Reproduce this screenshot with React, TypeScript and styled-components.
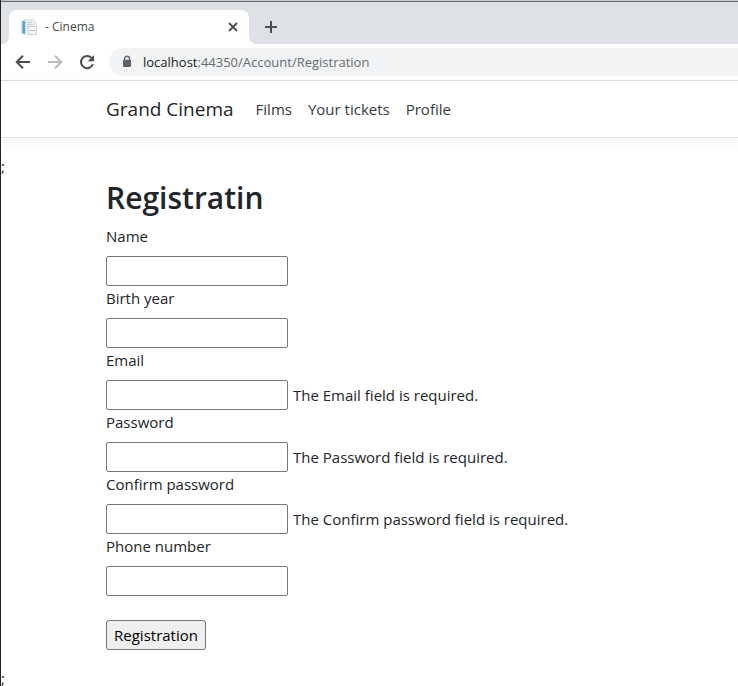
import React from "react";
import styled, { createGlobalStyle } from "styled-components";

const GlobalStyle = createGlobalStyle`
  *, *::before, *::after { box-sizing: border-box; }
  body {
    margin: 0;
    background: #fff;
    color: #212529;
    font-family: "Segoe UI", "Open Sans", "Noto Sans", sans-serif;
    font-size: 15px;
    line-height: 24px;
  }
`;

const Window = styled.div`
  border-left: 1px solid #242424;
  overflow: hidden;
`;

const TabStrip = styled.div`
  display: flex;
  align-items: flex-end;
  height: 44px;
  padding-left: 8px;
  border-top: 1px solid #c5cbc9;
  background: #dee1e6;
  box-shadow: inset 0 1px #666b6b;
`;

const Tab = styled.div`
  position: relative;
  display: flex;
  align-items: center;
  width: 240px;
  height: 34px;
  padding: 0 8px 0 12px;
  border-radius: 8px 8px 0 0;
  background: #fff;
  color: #45494d;
  font-size: 12px;

  &::before, &::after {
    content: "";
    position: absolute;
    bottom: 0;
    width: 8px;
    height: 8px;
  }
  &::before {
    right: 100%;
    background: radial-gradient(circle at 0 0, transparent 8px, #fff 8px);
  }
  &::after {
    left: 100%;
    background: radial-gradient(circle at 100% 0, transparent 8px, #fff 8px);
  }
`;

const TabTitle = styled.span`
  flex: 1;
  margin-left: 8px;
`;

const IconButton = styled.button<{ $size: number }>`
  display: grid;
  place-items: center;
  flex: none;
  width: ${(p) => p.$size}px;
  height: ${(p) => p.$size}px;
  padding: 0;
  border: 0;
  border-radius: 50%;
  background: transparent;
  color: #4a4e52;

  &:disabled { color: #b9bbbd; }
  svg { display: block; }
`;

const NewTab = styled(IconButton)`
  margin: 0 0 3px 8px;
`;

const Toolbar = styled.div`
  display: flex;
  align-items: center;
  gap: 4px;
  height: 37px;
  padding: 0 0 1px 8px;
  border-bottom: 1px solid #dadce0;
`;

const AddressBar = styled.div`
  display: flex;
  flex: 1;
  align-items: center;
  gap: 11px;
  height: 28px;
  margin-left: 4px;
  padding-left: 13px;
  border-radius: 14px 0 0 14px;
  background: #f1f3f4;
  color: #686c70;
  font-size: 13px;
`;

const Host = styled.span`
  color: #202124;
`;

const NavBar = styled.header`
  display: flex;
  align-items: center;
  height: 57px;
  padding: 0 105px;
  border-bottom: 1px solid #dee2e6;
  box-shadow: 0 4px 12px rgba(0, 0, 0, 0.05);
  white-space: nowrap;

  a { text-decoration: none; }
`;

const Brand = styled.a`
  margin-right: 22px;
  color: #212529;
  font-size: 19px;
  line-height: 28px;
`;

const NavLinks = styled.nav`
  display: flex;
  gap: 16px;
`;

const NavLink = styled.a`
  color: #343a40;
`;

const Page = styled.div`
  padding-top: 16px;
`;

const Main = styled.main`
  padding: 0 16px 16px 105px;
`;

const Title = styled.h1`
  margin: 0 0 6px;
  font-size: 30px;
  font-weight: 600;
  line-height: 40px;
`;

const Field = styled.div`
  label {
    display: block;
    margin-bottom: 8px;
  }
`;

const FieldRow = styled.div`
  display: flex;
  align-items: center;
  gap: 5px;
`;

const TextBox = styled.input`
  width: 182px;
  height: 30px;
  padding: 1px 2px;
  border: 1px solid #767676;
  border-radius: 2px;
  background: #fff;
  font: inherit;
`;

const Submit = styled.button`
  height: 30px;
  width: 100px;
  margin-top: 24px;
  padding: 0;
  border: 1px solid #767676;
  border-radius: 3px;
  background: #efefef;
  color: #000;
  font: inherit;
`;

const DocumentIcon = () => (
  <svg width="16" height="16" viewBox="0 0 16 16" aria-hidden="true">
    <path d="M3 .5h9.5L15 3v12.5H3z" fill="#e9eef2" stroke="#d3d9de" strokeWidth=".6" />
    <path d="M.5 1.5h4V15h-4z" fill="#b5d6ea" />
    <path d="M1.5 2H4v12.5H1.5z" fill="#5aa5d8" />
    <path d="M6 3.5h5M6 5.5h6M6 7.5h2M6 9.5h1" stroke="#c6ced6" />
    <path d="M8 7.5h7.5v8H8z" fill="#f6f7f8" stroke="#c5cbd1" strokeWidth=".8" />
    <path d="M9 11.5h5.5" stroke="#b3bac1" />
  </svg>
);

const CloseIcon = () => (
  <svg width="16" height="16" viewBox="0 0 16 16" fill="none" stroke="currentColor" strokeWidth="1.8" aria-hidden="true">
    <path d="M4 4l8 8M12 4l-8 8" />
  </svg>
);

const PlusIcon = () => (
  <svg width="16" height="16" viewBox="0 0 16 16" fill="none" stroke="currentColor" strokeWidth="2" aria-hidden="true">
    <path d="M8 2v12M2 8h12" />
  </svg>
);

const BackIcon = () => (
  <svg width="16" height="16" viewBox="0 0 16 16" fill="none" stroke="currentColor" strokeWidth="2" aria-hidden="true">
    <path d="M15 8H2M8 1.7L1.7 8 8 14.3" />
  </svg>
);

const ForwardIcon = () => (
  <svg width="16" height="16" viewBox="0 0 16 16" fill="none" stroke="currentColor" strokeWidth="2" aria-hidden="true">
    <path d="M1 8h13M8 1.7L14.3 8 8 14.3" />
  </svg>
);

const ReloadIcon = () => (
  <svg width="16" height="16" viewBox="0 0 16 16" aria-hidden="true">
    <path d="M13.9 10A6.1 6.1 0 1 1 12.6 3.9" fill="none" stroke="currentColor" strokeWidth="2" />
    <path d="M15 1v6.3H8.7z" fill="currentColor" />
  </svg>
);

const LockIcon = () => (
  <svg width="10" height="14" viewBox="0 0 10 14" aria-hidden="true">
    <path d="M2.5 6V3.7a2.5 2.5 0 0 1 5 0V6" fill="none" stroke="#5f6368" strokeWidth="1.4" />
    <rect x="1" y="4.8" width="8" height="7.2" rx="1" fill="#5f6368" />
  </svg>
);

const fields = [
  { id: "name", label: "Name", type: "text" },
  { id: "birth-year", label: "Birth year", type: "text" },
  { id: "email", label: "Email", type: "email", error: "The Email field is required." },
  { id: "password", label: "Password", type: "password", error: "The Password field is required." },
  { id: "confirm", label: "Confirm password", type: "password", error: "The Confirm password field is required." },
  { id: "phone", label: "Phone number", type: "tel" },
];

export default function App() {
  return (
    <Window>
      <GlobalStyle />
      <TabStrip>
        <Tab>
          <DocumentIcon />
          <TabTitle>- Cinema</TabTitle>
          <IconButton $size={16} aria-label="Close tab"><CloseIcon /></IconButton>
        </Tab>
        <NewTab $size={28} aria-label="New tab"><PlusIcon /></NewTab>
      </TabStrip>
      <Toolbar>
        <IconButton $size={28} aria-label="Back"><BackIcon /></IconButton>
        <IconButton $size={28} aria-label="Forward" disabled><ForwardIcon /></IconButton>
        <IconButton $size={28} aria-label="Reload"><ReloadIcon /></IconButton>
        <AddressBar>
          <LockIcon />
          <span><Host>localhost</Host>:44350/Account/Registration</span>
        </AddressBar>
      </Toolbar>
      <NavBar>
        <Brand href="#">Grand Cinema</Brand>
        <NavLinks>
          <NavLink href="#films">Films</NavLink>
          <NavLink href="#tickets">Your tickets</NavLink>
          <NavLink href="#profile">Profile</NavLink>
        </NavLinks>
      </NavBar>
      <Page>
        <div>;</div>
        <Main>
          <Title>Registratin</Title>
          <form onSubmit={(e) => e.preventDefault()}>
            {fields.map((f) => (
              <Field key={f.id}>
                <label htmlFor={f.id}>{f.label}</label>
                <FieldRow>
                  <TextBox id={f.id} type={f.type} aria-describedby={f.error ? `${f.id}-error` : undefined} />
                  {f.error && <span id={`${f.id}-error`}>{f.error}</span>}
                </FieldRow>
              </Field>
            ))}
            <Submit type="submit">Registration</Submit>
          </form>
        </Main>
        <div>;</div>
      </Page>
    </Window>
  );
}
